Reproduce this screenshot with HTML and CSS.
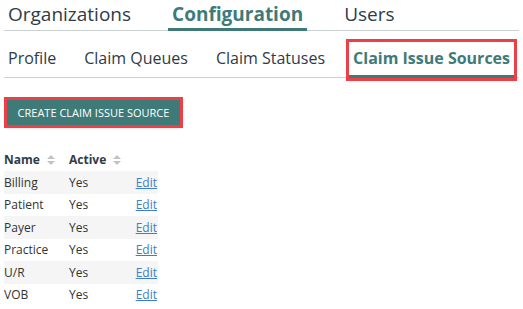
FILE: index.html
```html
<!DOCTYPE html>
<html lang="en">

<head>
  <meta charset="UTF-8">
  <meta name="viewport" content="width=device-width, initial-scale=1.0">
  <title>Configuration</title>
  <link rel="stylesheet" href="styles.css">
</head>

<body>
  <div class="page">
    <div class="nav-main">
      <a class="tab">Organizations</a>
      <a class="tab active">Configuration</a>
      <a class="tab">Users</a>
    </div>
    <div class="nav-sub">
      <a class="sub">Profile</a>
      <a class="sub">Claim Queues</a>
      <a class="sub">Claim Statuses</a>
      <a class="sub active marked">Claim Issue Sources</a>
    </div>
    <button class="btn-create">CREATE CLAIM ISSUE SOURCE</button>
    <table class="list" cellpadding="0" cellspacing="0">
      <tr>
        <th class="c-name">Name <span class="sort"></span></th>
        <th class="c-active">Active <span class="sort"></span></th>
        <th class="c-edit"></th>
      </tr>
      <tr>
        <td>Billing</td>
        <td>Yes</td>
        <td class="c-edit"><a href="#">Edit</a></td>
      </tr>
      <tr>
        <td>Patient</td>
        <td>Yes</td>
        <td class="c-edit"><a href="#">Edit</a></td>
      </tr>
      <tr>
        <td>Payer</td>
        <td>Yes</td>
        <td class="c-edit"><a href="#">Edit</a></td>
      </tr>
      <tr>
        <td>Practice</td>
        <td>Yes</td>
        <td class="c-edit"><a href="#">Edit</a></td>
      </tr>
      <tr>
        <td>U/R</td>
        <td>Yes</td>
        <td class="c-edit"><a href="#">Edit</a></td>
      </tr>
      <tr>
        <td>VOB</td>
        <td>Yes</td>
        <td class="c-edit"><a href="#">Edit</a></td>
      </tr>
    </table>
  </div>
</body>

</html>
```

FILE: styles.css
```css
body {
  margin: 0;
  padding: 0;
  background: #fff;
  font-family: "Open Sans", "Noto Sans", sans-serif;
  color: #333;
}

.page {
  width: 515px;
  padding: 0 4px;
}

.nav-main {
  display: flex;
  gap: 33px;
  border-bottom: 1px solid #c9d1d1;
}

.tab {
  padding: 0 4px;
  font-size: 19px;
  line-height: 28px;
  white-space: nowrap;
  color: #2f3b46;
  border-bottom: 3px solid transparent;
  margin-bottom: -1px;
}

.tab.active {
  color: #3e7b78;
  font-weight: 700;
  border-bottom-color: #3e7b78;
}

.nav-sub {
  display: flex;
  gap: 20px;
  padding-top: 11px;
  border-bottom: 1px solid #c9d1d1;
}

.sub {
  padding: 0 4px;
  font-size: 16px;
  line-height: 33px;
  white-space: nowrap;
  color: #2f3b46;
  border-bottom: 3px solid transparent;
  margin-bottom: -1px;
}

.sub.active {
  color: #3e7b78;
  font-weight: 700;
  border-bottom-color: #3e7b78;
}

.marked {
  outline: 3px solid #ee3e46;
}

.btn-create {
  display: block;
  width: 173px;
  height: 25px;
  margin: 22px 0 0 3px;
  padding: 0;
  border: none;
  background-color: #3e7b78;
  color: #fff;
  font-family: "Open Sans", "Noto Sans", sans-serif;
  font-size: 11px;
  white-space: nowrap;
  outline: 3px solid #ee3e46;
  box-shadow: 0 2px 4px rgba(0, 0, 0, 0.25);
}

.list {
  margin-top: 22px;
  font-size: 12px;
  width: 154px;
}

.list th {
  text-align: left;
  font-weight: 700;
  height: 24px;
  padding: 0;
  white-space: nowrap;
  color: #2f3b46;
}

.list td {
  height: 22.5px;
  padding: 0;
}

.list tr:nth-child(even) td {
  background-color: #f5f5f5;
}

.c-name {
  width: 65px;
}

.c-active {
  width: 55px;
}

.c-edit {
  text-align: right;
  padding-right: 1px !important;
}

.c-edit a {
  color: #3d7fc6;
  text-decoration: underline;
}

.sort {
  display: inline-block;
  width: 8px;
  height: 10px;
  margin-left: 4px;
  vertical-align: -1px;
  position: relative;
}

.sort::before,
.sort::after {
  content: "";
  position: absolute;
  left: 0;
  border-left: 4px solid transparent;
  border-right: 4px solid transparent;
}

.sort::before {
  top: 0;
  border-bottom: 4px solid #c4c4c4;
}

.sort::after {
  bottom: 0;
  border-top: 4px solid #c4c4c4;
}
```
